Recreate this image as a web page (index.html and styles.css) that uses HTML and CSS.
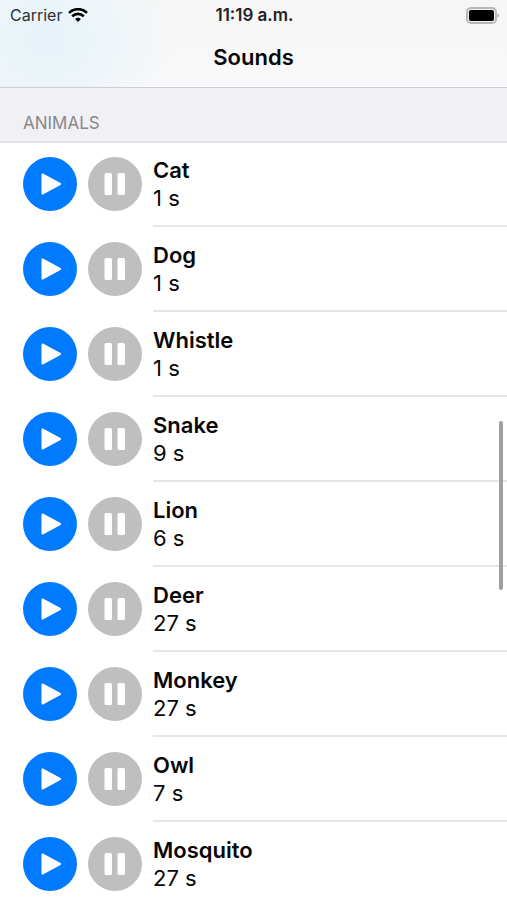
FILE: index.html
```html
<!DOCTYPE html>
<html lang="en">
<head>
<meta charset="utf-8">
<meta name="viewport" content="width=device-width, initial-scale=1">
<title>Sounds</title>
<link rel="stylesheet" href="styles.css">
</head>
<body>
<header class="navbar">
  <div class="status">
    <div class="carrier">
      <span>Carrier</span>
      <svg class="wifi" viewBox="0 0 20 14" aria-hidden="true">
        <path d="M1 4.900C6 -.1 14 -.1 19 4.900" />
        <path d="M4.200 8.300C7.500 5 12.500 5 15.800 8.300" />
        <path class="dot" d="M10 13.900L7.100 11Q10 8.600 12.900 11Z" />
      </svg>
    </div>
    <time class="clock">11:19 a.m.</time>
    <svg class="battery" viewBox="0 0 33 17" aria-hidden="true">
      <rect class="shell" x="1" y="1" width="29" height="15" rx="4" />
      <rect x="3" y="3" width="25" height="11" rx="2" />
      <path class="tip" d="M31.500 6.500Q33 7 33 8.500T31.500 10.500Z" />
    </svg>
  </div>
  <h1 class="title">Sounds</h1>
</header>
<main>
  <h2 class="section">ANIMALS</h2>
  <ul class="list" id="sounds"></ul>
</main>
<div class="scroller"></div>
<template id="row">
  <li class="row">
    <div class="controls">
      <button class="round play" type="button">
        <svg viewBox="0 0 54 54" aria-hidden="true"><path d="M19.500 17.500L37 27L19.500 36.500Z" /></svg>
      </button>
      <button class="round pause" type="button">
        <svg viewBox="0 0 54 54" aria-hidden="true"><rect x="16.500" y="16" width="7.500" height="22" rx="1.500" /><rect x="29.500" y="16" width="7.500" height="22" rx="1.500" /></svg>
      </button>
    </div>
    <div class="info">
      <span class="name"></span>
      <span class="length"></span>
    </div>
  </li>
</template>
<script src="script.js"></script>
</body>
</html>
```
FILE: styles.css
```css
* {
  box-sizing: border-box;
}

body {
  margin: 0;
  position: relative;
  background: #fff;
  color: #080808;
  font-family: Inter, "Liberation Sans", sans-serif;
}

.navbar {
  height: 88px;
  border-bottom: 1px solid #cdcdd2;
  background:
    radial-gradient(ellipse 130px 110px at 45px 40px, #e6f3f9, #eef5f9 50%, transparent),
    linear-gradient(#f6f6f6, #f9f9fb);
}

.status {
  display: grid;
  grid-template-columns: 1fr auto 1fr;
  align-items: center;
  height: 30px;
  padding: 0 8px 0 10px;
  font-size: 16px;
  line-height: 20px;
}

.carrier {
  display: flex;
  align-items: center;
  gap: 6px;
  color: #2b3338;
}

.wifi {
  width: 20px;
  height: 14px;
  fill: none;
  stroke: #000;
  stroke-width: 2.600;
}

.wifi .dot {
  fill: #000;
  stroke: none;
}

.clock {
  font-size: 17px;
  font-weight: 600;
  color: #222;
}

.battery {
  justify-self: end;
  width: 33px;
  height: 17px;
}

.shell {
  fill: #f0f0f0;
  stroke: #b8b8b8;
  stroke-width: 2;
}

.tip {
  fill: #a8a8a8;
}

.title {
  margin: 12px 0 0;
  font-size: 22px;
  font-weight: 600;
  line-height: 30px;
  text-align: center;
}

.section {
  margin: 0;
  padding: 24px 23px 7px;
  border-bottom: 2px solid #e2e2e5;
  background: #f0f0f5;
  color: #88888c;
  font-size: 17px;
  font-weight: 400;
  line-height: 22px;
}

.list {
  margin: -1px 0 0;
  padding: 0;
  list-style: none;
}

.row {
  display: flex;
  height: 85px;
  padding-left: 23px;
}

.controls {
  display: flex;
  flex: none;
  gap: 11px;
  padding: 15px 11px 0 0;
}

.round {
  width: 54px;
  height: 54px;
  padding: 0;
  border: 0;
  border-radius: 50%;
}

.round svg {
  display: block;
  fill: #fff;
}

.play {
  background: #007aff;
}

.play path {
  stroke: #fff;
  stroke-width: 2;
  stroke-linejoin: round;
}

.pause {
  background: #bfbfbf;
}

.info {
  display: flex;
  flex: 1;
  flex-direction: column;
  padding-top: 14px;
  border-bottom: 2px solid #e6e6e6;
  font-size: 22px;
  line-height: 28px;
}

.name {
  font-weight: 600;
}

.row:last-child .info {
  border-bottom: 0;
}

.scroller {
  position: absolute;
  top: 421px;
  right: 4px;
  width: 4px;
  height: 169px;
  border-radius: 2px;
  background: #a0a0a0;
}
```
FILE: script.js
```js
const sounds = [
  ["Cat", 1],
  ["Dog", 1],
  ["Whistle", 1],
  ["Snake", 9],
  ["Lion", 6],
  ["Deer", 27],
  ["Monkey", 27],
  ["Owl", 7],
  ["Mosquito", 27],
];

const list = document.getElementById("sounds");
const template = document.getElementById("row");

for (const [name, seconds] of sounds) {
  const row = template.content.cloneNode(true);
  row.querySelector(".name").textContent = name;
  row.querySelector(".length").textContent = `${seconds} s`;
  row.querySelector(".play").setAttribute("aria-label", `Play ${name}`);
  row.querySelector(".pause").setAttribute("aria-label", `Pause ${name}`);
  list.append(row);
}
```
